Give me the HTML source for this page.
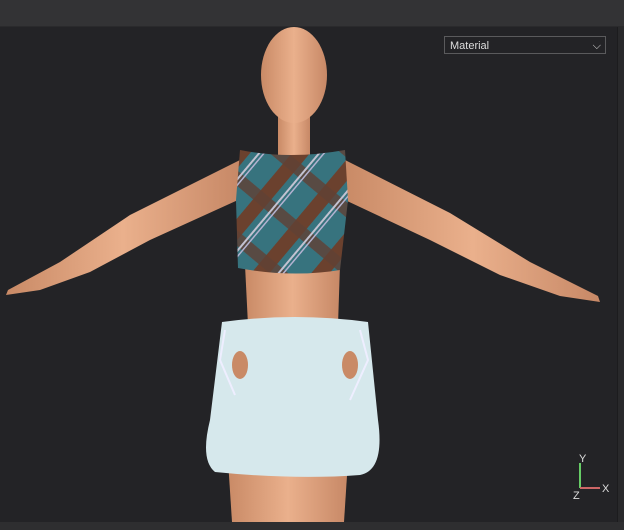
<!DOCTYPE html><html><head><style>
body{margin:0;width:624px;height:530px;overflow:hidden;background:#232326;font-family:"Liberation Sans",sans-serif}
.top{position:absolute;left:0;top:0;width:624px;height:26px;background:#333335;border-bottom:1px solid #2a2a2c}
.right{position:absolute;right:0;top:27px;width:6px;height:495px;background:#29292b;border-left:1px solid #1c1c1e}
.bot{position:absolute;left:0;top:522px;width:624px;height:8px;background:#2e2e30}
.sel{position:absolute;left:444px;top:36px;width:162px;height:18px;border:1px solid #5a5a5c;background:#232326;color:#ddd;font-size:11px;line-height:18px;padding-left:5px;box-sizing:border-box}
</style></head><body>
<div class="top"></div><div class="right"></div><div class="bot"></div>
<svg width="624" height="530" style="position:absolute;left:0;top:0">
<defs>
<linearGradient id="sk" x1="0" x2="1"><stop offset="0" stop-color="#c98a66"/><stop offset=".5" stop-color="#eab08c"/><stop offset="1" stop-color="#c78866"/></linearGradient>
<pattern id="pl" width="46" height="46" patternUnits="userSpaceOnUse" patternTransform="rotate(40)">
<rect width="46" height="46" fill="#3f8390"/>
<rect x="0" y="0" width="14" height="46" fill="#7a4a35"/>
<rect x="0" y="24" width="46" height="12" fill="#6e4a3c" opacity=".8"/>
<rect x="20" y="0" width="2" height="46" fill="#dde"/><rect x="24" y="0" width="1.5" height="46" fill="#cce"/>
</pattern>
</defs>
<g fill="url(#sk)">
<path d="M240 160 L130 215 L60 262 L8 290 L6 295 L40 290 L90 272 L150 240 L238 200Z"/>
<path d="M345 160 L450 213 L530 262 L598 296 L600 302 L560 296 L500 275 L430 240 L345 200Z"/>
<rect x="278" y="105" width="32" height="50"/>
<path d="M245 265 L340 265 L338 325 L248 325Z"/>
<path d="M228 460 L348 460 L344 522 L232 522Z"/>
<ellipse cx="294" cy="75" rx="33" ry="48"/>
</g>
<path d="M240 150 Q290 160 345 150 L348 200 L340 270 Q292 278 238 268 L236 200Z" fill="url(#pl)"/>
<path d="M240 150 Q290 160 345 150 L348 200 L340 270 Q292 278 238 268 L236 200Z" fill="#000" opacity=".12"/>
<path d="M222 322 Q295 312 368 322 L378 420 Q385 470 360 475 Q295 480 215 472 Q200 460 210 420Z" fill="#d6e8ec"/>
<ellipse cx="240" cy="365" rx="8" ry="14" fill="#c98a66"/><ellipse cx="350" cy="365" rx="8" ry="14" fill="#c98a66"/>
<path d="M225 330 L220 360 L235 395 M360 330 L368 360 L350 400" stroke="#eef" stroke-width="2" fill="none"/>
<g stroke-width="2"><line x1="580" y1="488" x2="580" y2="463" stroke="#6c6"/><line x1="580" y1="488" x2="600" y2="488" stroke="#c66"/></g>
<g fill="#ddd" font-size="11"><text x="579" y="462">Y</text><text x="602" y="492">X</text><text x="573" y="499">Z</text></g>
</svg>
<div class="sel">Material<span style="position:absolute;right:4px;top:0">⌵</span></div>
</body></html>
